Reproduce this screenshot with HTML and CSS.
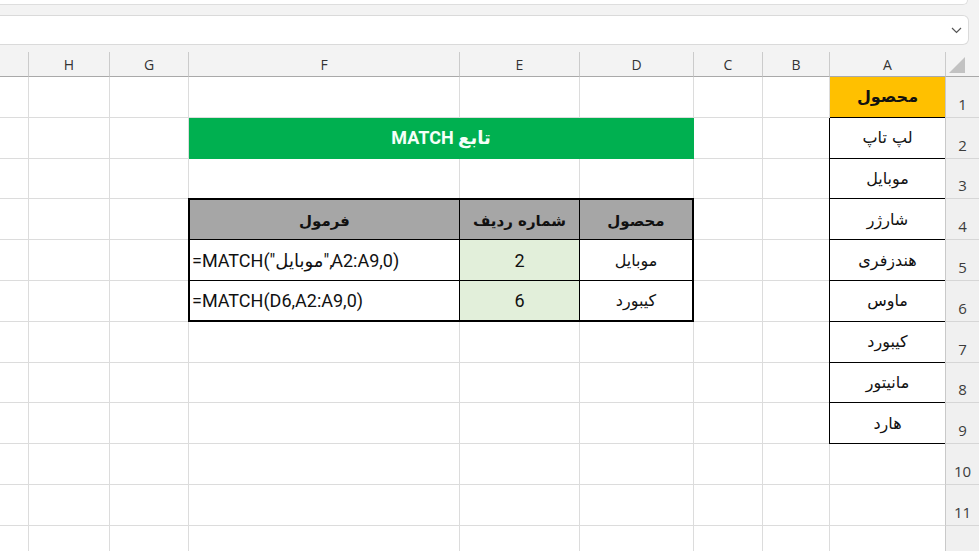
FILE: index.html
```html
<!DOCTYPE html>
<html lang="fa">
<head>
<meta charset="utf-8">
<title>MATCH</title>
<link rel="stylesheet" href="styles.css">
</head>
<body>
<div class="topbar">
  <div class="namebox"></div>
  <div class="formulabar">
    <svg class="chev" width="11" height="7" viewBox="0 0 11 7"><path d="M1 1 L5.5 5.5 L10 1" fill="none" stroke="#555" stroke-width="1.2"/></svg>
  </div>
</div>

<div class="sheet">
  <div class="row head">
    <div class="c"></div><div class="c">H</div><div class="c">G</div><div class="c">F</div><div class="c">E</div><div class="c">D</div><div class="c">C</div><div class="c">B</div><div class="c">A</div>
    <div class="c corner"><svg width="18" height="17" viewBox="0 0 18 17"><polygon points="1,16 17,16 17,0" fill="#c2c2c2"/></svg></div>
  </div>

  <div class="row">
    <div class="c"></div><div class="c"></div><div class="c"></div><div class="c"></div><div class="c"></div><div class="c"></div><div class="c"></div><div class="c"></div>
    <div class="c a a1 fa bold">محصول</div><div class="c num">1</div>
  </div>

  <div class="row">
    <div class="c"></div><div class="c"></div><div class="c"></div>
    <div class="c title" dir="rtl">تابع MATCH</div>
    <div class="c"></div><div class="c"></div>
    <div class="c a ab fa">لپ تاپ</div><div class="c num">2</div>
  </div>

  <div class="row">
    <div class="c"></div><div class="c"></div><div class="c"></div><div class="c"></div><div class="c"></div><div class="c"></div><div class="c"></div><div class="c"></div>
    <div class="c a ab fa">موبایل</div><div class="c num">3</div>
  </div>

  <div class="row">
    <div class="c"></div><div class="c"></div><div class="c"></div>
    <div class="c t th tf tt fa bold">فرمول</div>
    <div class="c t th tt fa bold">شماره ردیف</div>
    <div class="c t th tt td fa bold">محصول</div>
    <div class="c"></div><div class="c"></div>
    <div class="c a ab fa">شارژر</div><div class="c num">4</div>
  </div>

  <div class="row">
    <div class="c"></div><div class="c"></div><div class="c"></div>
    <div class="c t tf formula" dir="ltr">=MATCH("موبایل",A2:A9,0)</div>
    <div class="c t tn">2</div>
    <div class="c t td fa">موبایل</div>
    <div class="c"></div><div class="c"></div>
    <div class="c a ab fa">هندزفری</div><div class="c num">5</div>
  </div>

  <div class="row">
    <div class="c"></div><div class="c"></div><div class="c"></div>
    <div class="c t tf tb formula" dir="ltr">=MATCH(D6,A2:A9,0)</div>
    <div class="c t tn tb">6</div>
    <div class="c t td tb fa">کیبورد</div>
    <div class="c"></div><div class="c"></div>
    <div class="c a ab fa">ماوس</div><div class="c num">6</div>
  </div>

  <div class="row">
    <div class="c"></div><div class="c"></div><div class="c"></div><div class="c"></div><div class="c"></div><div class="c"></div><div class="c"></div><div class="c"></div>
    <div class="c a ab fa">کیبورد</div><div class="c num">7</div>
  </div>

  <div class="row">
    <div class="c"></div><div class="c"></div><div class="c"></div><div class="c"></div><div class="c"></div><div class="c"></div><div class="c"></div><div class="c"></div>
    <div class="c a ab fa">مانیتور</div><div class="c num">8</div>
  </div>

  <div class="row">
    <div class="c"></div><div class="c"></div><div class="c"></div><div class="c"></div><div class="c"></div><div class="c"></div><div class="c"></div><div class="c"></div>
    <div class="c a ab fa">هارد</div><div class="c num">9</div>
  </div>

  <div class="row">
    <div class="c"></div><div class="c"></div><div class="c"></div><div class="c"></div><div class="c"></div><div class="c"></div><div class="c"></div><div class="c"></div><div class="c"></div><div class="c num">10</div>
  </div>

  <div class="row">
    <div class="c"></div><div class="c"></div><div class="c"></div><div class="c"></div><div class="c"></div><div class="c"></div><div class="c"></div><div class="c"></div><div class="c"></div><div class="c num">11</div>
  </div>

  <div class="row">
    <div class="c"></div><div class="c"></div><div class="c"></div><div class="c"></div><div class="c"></div><div class="c"></div><div class="c"></div><div class="c"></div><div class="c"></div><div class="c num"></div>
  </div>
</div>
</body>
</html>
```

FILE: styles.css
```css
html, body {
  margin: 0;
  padding: 0;
}
body {
  width: 979px;
  height: 551px;
  overflow: hidden;
  background: #ffffff;
  font-family: Roboto, "DejaVu Sans", sans-serif;
  color: #111;
}

.topbar {
  height: 52px;
  background: #f3f3f3;
  display: flex;
  flex-direction: column;
  box-sizing: border-box;
}
.namebox {
  height: 4px;
  margin-right: 11px;
  background: #fff;
  border-right: 1px solid #dedede;
  border-bottom: 1px solid #dedede;
  border-radius: 0 0 6px 0;
}
.formulabar {
  margin-top: 10px;
  height: 28px;
  margin-right: 10px;
  background: #fff;
  border: 1px solid #dadada;
  border-left: none;
  border-radius: 0 6px 6px 0;
  display: flex;
  align-items: center;
  justify-content: flex-end;
  padding-right: 6px;
}

.sheet {
  display: flex;
  flex-direction: column;
}
.row {
  display: grid;
  grid-template-columns: 29px 81px 79px 271px 120px 114px 69px 67px 116px 33px;
  height: 40.8px;
}
.c {
  box-sizing: border-box;
  border-right: 1px solid #dcdcdc;
  border-bottom: 1px solid #dcdcdc;
  display: flex;
  align-items: center;
  justify-content: center;
  white-space: nowrap;
  overflow: hidden;
}

.head {
  height: 25px;
  background: #f3f3f3;
}
.head .c {
  font-family: "Open Sans", "Noto Sans", sans-serif;
  font-size: 14px;
  color: #333;
  border-right: 1px solid #cbcbcb;
  border-bottom: 1px solid #a9a9a9;
  padding-top: 1px;
}
.head .corner {
  border-right: none;
  justify-content: flex-start;
  align-items: flex-end;
  padding: 0 0 2px 2px;
}

.num {
  background: #f0f0f0;
  border-right: none;
  border-bottom: 1px solid #d6d6d6;
  border-left: 1px solid #c9c9c9;
  margin-left: -1px;
  font-family: "Open Sans", "Noto Sans", sans-serif;
  font-size: 15px;
  color: #3c3c3c;
  align-items: flex-end;
  padding-bottom: 3px;
}

.fa {
  font-family: "DejaVu Sans", sans-serif;
  font-size: 16px;
}
.bold {
  font-weight: bold;
}

.a1 {
  background: #ffc000;
  border-bottom: 1px solid #000;
  border-right-color: #ffc000;
}
.ab {
  border-right: 1px solid #000;
  border-bottom: 1px solid #000;
  box-shadow: -1px 0 0 #000;
}

.title {
  grid-column: span 3;
  background: #00b050;
  border-right-color: #00b050;
  color: #f4fff8;
  font-weight: bold;
  font-size: 18px;
  border-bottom-color: #00b050;
}

.t {
  border-right: 1px solid #000;
  border-bottom: 1px solid #000;
  font-size: 16px;
}
.th {
  background: #a6a6a6;
  padding-top: 2px;
}
.th.fa {
  font-size: 15px;
}
.tt {
  border-top: 1px solid #000;
  box-shadow: 0 -1px 0 #000;
}
.tf {
  border-left: 1px solid #000;
  box-shadow: -1px 0 0 #000;
}
.tf.tt {
  box-shadow: -1px 0 0 #000, 0 -1px 0 #000, -1px -1px 0 #000;
}
.td {
  border-right: 2px solid #000;
}
.tb {
  border-bottom: 2px solid #000;
}
.tn {
  background: #e2efda;
  font-family: Roboto, sans-serif;
  font-size: 18px;
}
.formula {
  justify-content: flex-start;
  padding-left: 2px;
  font-size: 18px;
  font-family: Roboto, "DejaVu Sans", sans-serif;
}
```
